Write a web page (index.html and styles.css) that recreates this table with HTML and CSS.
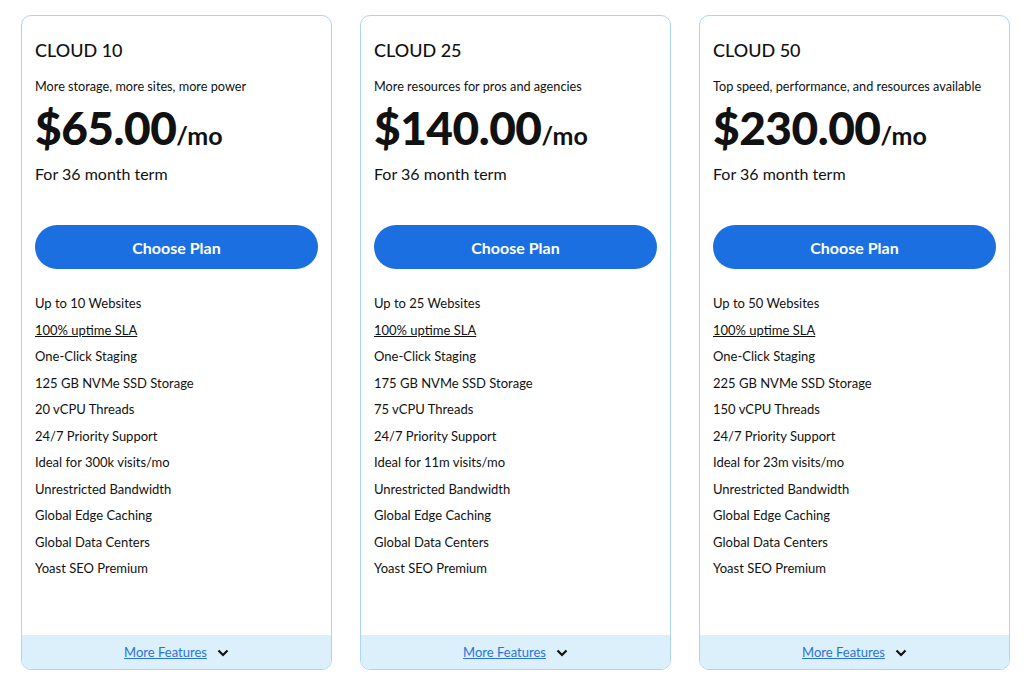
FILE: index.html
```html
<!DOCTYPE html>
<html lang="en">
<head>
    <meta charset="UTF-8">
    <meta name="viewport" content="width=device-width, initial-scale=1.0">
    <title>Cloud Plans</title>
    <link rel="stylesheet" href="styles.css">
</head>
<body>
    <div class="plans">
        <div class="plan-card">
            <div class="plan-body">
                <h2 class="plan-name">CLOUD 10</h2>
                <p class="plan-desc">More storage, more sites, more power</p>
                <div class="plan-price">$65.00<span class="per">/mo</span></div>
                <p class="plan-term">For 36 month term</p>
                <button type="button" class="choose-button">Choose Plan</button>
                <ul class="features">
                    <li>Up to 10 Websites</li>
                    <li><a href="#" class="sla">100% uptime SLA</a></li>
                    <li>One-Click Staging</li>
                    <li>125 GB NVMe SSD Storage</li>
                    <li>20 vCPU Threads</li>
                    <li>24/7 Priority Support</li>
                    <li>Ideal for 300k visits/mo</li>
                    <li>Unrestricted Bandwidth</li>
                    <li>Global Edge Caching</li>
                    <li>Global Data Centers</li>
                    <li>Yoast SEO Premium</li>
                </ul>
            </div>
            <div class="more-features">
                <a href="#">More Features</a>
                <svg class="chevron" width="12" height="8" viewBox="0 0 12 8"><path d="M1.5 1.5 L6 6 L10.5 1.5" fill="none" stroke="#111" stroke-width="2.2"/></svg>
            </div>
        </div>

        <div class="plan-card">
            <div class="plan-body">
                <h2 class="plan-name">CLOUD 25</h2>
                <p class="plan-desc">More resources for pros and agencies</p>
                <div class="plan-price">$140.00<span class="per">/mo</span></div>
                <p class="plan-term">For 36 month term</p>
                <button type="button" class="choose-button">Choose Plan</button>
                <ul class="features">
                    <li>Up to 25 Websites</li>
                    <li><a href="#" class="sla">100% uptime SLA</a></li>
                    <li>One-Click Staging</li>
                    <li>175 GB NVMe SSD Storage</li>
                    <li>75 vCPU Threads</li>
                    <li>24/7 Priority Support</li>
                    <li>Ideal for 11m visits/mo</li>
                    <li>Unrestricted Bandwidth</li>
                    <li>Global Edge Caching</li>
                    <li>Global Data Centers</li>
                    <li>Yoast SEO Premium</li>
                </ul>
            </div>
            <div class="more-features">
                <a href="#">More Features</a>
                <svg class="chevron" width="12" height="8" viewBox="0 0 12 8"><path d="M1.5 1.5 L6 6 L10.5 1.5" fill="none" stroke="#111" stroke-width="2.2"/></svg>
            </div>
        </div>

        <div class="plan-card">
            <div class="plan-body">
                <h2 class="plan-name">CLOUD 50</h2>
                <p class="plan-desc">Top speed, performance, and resources available</p>
                <div class="plan-price">$230.00<span class="per">/mo</span></div>
                <p class="plan-term">For 36 month term</p>
                <button type="button" class="choose-button">Choose Plan</button>
                <ul class="features">
                    <li>Up to 50 Websites</li>
                    <li><a href="#" class="sla">100% uptime SLA</a></li>
                    <li>One-Click Staging</li>
                    <li>225 GB NVMe SSD Storage</li>
                    <li>150 vCPU Threads</li>
                    <li>24/7 Priority Support</li>
                    <li>Ideal for 23m visits/mo</li>
                    <li>Unrestricted Bandwidth</li>
                    <li>Global Edge Caching</li>
                    <li>Global Data Centers</li>
                    <li>Yoast SEO Premium</li>
                </ul>
            </div>
            <div class="more-features">
                <a href="#">More Features</a>
                <svg class="chevron" width="12" height="8" viewBox="0 0 12 8"><path d="M1.5 1.5 L6 6 L10.5 1.5" fill="none" stroke="#111" stroke-width="2.2"/></svg>
            </div>
        </div>
    </div>
</body>
</html>
```

FILE: styles.css
```css
body {
    font-family: Lato, "Open Sans", Arial, sans-serif;
    background-color: #fff;
    color: #111;
    margin: 0;
    padding: 0;
}

.plans {
    display: grid;
    grid-template-columns: repeat(3, 311px);
    column-gap: 28px;
    padding: 15px 0 0 21px;
}

.plan-card {
    height: 655px;
    box-sizing: border-box;
    border: 1px solid #add3f6;
    border-radius: 10px;
    display: flex;
    flex-direction: column;
    overflow: hidden;
}

.plan-body {
    padding: 22px 13px 0 13px;
}

.plan-name {
    font-size: 18px;
    line-height: 24px;
    font-weight: 500;
    margin: 0;
}

.plan-desc {
    font-size: 12.7px;
    line-height: 18px;
    margin: 15px 0 0;
}

.plan-price {
    font-size: 46px;
    line-height: 52px;
    height: 52px;
    font-weight: 900;
    margin-top: 7px;
    letter-spacing: -0.5px;
}

.plan-price .per {
    font-size: 25px;
    line-height: 1;
    font-weight: 700;
    letter-spacing: 0;
}

.plan-term {
    font-size: 16px;
    line-height: 22px;
    margin: 9px 0 0;
}

.choose-button {
    display: block;
    width: 100%;
    height: 44px;
    margin-top: 40px;
    background-color: #1b6fe0;
    color: #fff;
    border: none;
    border-radius: 22px;
    font-family: inherit;
    font-size: 16px;
    font-weight: 700;
    cursor: pointer;
}

.features {
    list-style: none;
    margin: 25px 0 0;
    padding: 0;
}

.features li {
    font-size: 13px;
    line-height: 18px;
    margin-bottom: 8.5px;
}

.features .sla {
    color: #111;
    text-decoration: underline;
}

.more-features {
    margin-top: auto;
    height: 34px;
    background-color: #dcf0fb;
    display: flex;
    align-items: center;
    justify-content: center;
    gap: 10px;
    font-size: 13px;
}

.more-features a {
    color: #2a73de;
}

.chevron {
    margin-top: 1px;
}
```
